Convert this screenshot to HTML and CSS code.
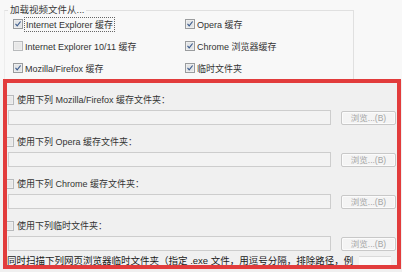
FILE: index.html
```html
<!DOCTYPE html>
<html>
<head>
<meta charset="utf-8">
<link rel="stylesheet" href="styles.css">
</head>
<body>
<div class="page">
  <div class="top">
    <fieldset class="group">
      <legend>加载视频文件从...</legend>
      <div class="grid">
        <div class="opt">
          <svg class="cb" viewBox="0 0 10 10"><rect x=".5" y=".5" width="9" height="9" fill="#f6f6f6" stroke="#9a9c9e"/><rect x="1.5" y="1.5" width="7" height="7" fill="#e2e4e6"/><path d="M2.5 4.9 L4.2 6.9 L7.6 2.5" fill="none" stroke="#3a5a8c" stroke-width="1.1"/></svg>
          <span class="focus">Internet Explorer 缓存</span>
        </div>
        <div class="opt">
          <svg class="cb" viewBox="0 0 10 10"><rect x=".5" y=".5" width="9" height="9" fill="#f6f6f6" stroke="#9a9c9e"/><rect x="1.5" y="1.5" width="7" height="7" fill="#e2e4e6"/><path d="M2.5 4.9 L4.2 6.9 L7.6 2.5" fill="none" stroke="#3a5a8c" stroke-width="1.1"/></svg>
          <span>Opera 缓存</span>
        </div>
        <div class="opt">
          <svg class="cb" viewBox="0 0 10 10"><rect x=".5" y=".5" width="9" height="9" fill="#f4f4f4" stroke="#b8babc"/><rect x="1.5" y="1.5" width="7" height="7" fill="#e8e8e8"/></svg>
          <span>Internet Explorer 10/11 缓存</span>
        </div>
        <div class="opt">
          <svg class="cb" viewBox="0 0 10 10"><rect x=".5" y=".5" width="9" height="9" fill="#f6f6f6" stroke="#9a9c9e"/><rect x="1.5" y="1.5" width="7" height="7" fill="#e2e4e6"/><path d="M2.5 4.9 L4.2 6.9 L7.6 2.5" fill="none" stroke="#3a5a8c" stroke-width="1.1"/></svg>
          <span>Chrome 浏览器缓存</span>
        </div>
        <div class="opt">
          <svg class="cb" viewBox="0 0 10 10"><rect x=".5" y=".5" width="9" height="9" fill="#f6f6f6" stroke="#9a9c9e"/><rect x="1.5" y="1.5" width="7" height="7" fill="#e2e4e6"/><path d="M2.5 4.9 L4.2 6.9 L7.6 2.5" fill="none" stroke="#3a5a8c" stroke-width="1.1"/></svg>
          <span>Mozilla/Firefox 缓存</span>
        </div>
        <div class="opt">
          <svg class="cb" viewBox="0 0 10 10"><rect x=".5" y=".5" width="9" height="9" fill="#f6f6f6" stroke="#9a9c9e"/><rect x="1.5" y="1.5" width="7" height="7" fill="#e2e4e6"/><path d="M2.5 4.9 L4.2 6.9 L7.6 2.5" fill="none" stroke="#3a5a8c" stroke-width="1.1"/></svg>
          <span>临时文件夹</span>
        </div>
      </div>
    </fieldset>
  </div>

  <div class="lower">
    <div class="block">
      <div class="opt sub">
        <svg class="cb" viewBox="0 0 10 10"><rect x=".5" y=".5" width="9" height="9" fill="#f4f4f4" stroke="#b8babc"/><rect x="1.5" y="1.5" width="7" height="7" fill="#e8e8e8"/></svg>
        <span>使用下列 Mozilla/Firefox 缓存文件夹：</span>
      </div>
      <div class="pathrow"><div class="field"></div><div class="btn">浏览...(B)</div></div>
    </div>
    <div class="block">
      <div class="opt sub">
        <svg class="cb" viewBox="0 0 10 10"><rect x=".5" y=".5" width="9" height="9" fill="#f4f4f4" stroke="#b8babc"/><rect x="1.5" y="1.5" width="7" height="7" fill="#e8e8e8"/></svg>
        <span>使用下列 Opera 缓存文件夹：</span>
      </div>
      <div class="pathrow"><div class="field"></div><div class="btn">浏览...(B)</div></div>
    </div>
    <div class="block">
      <div class="opt sub">
        <svg class="cb" viewBox="0 0 10 10"><rect x=".5" y=".5" width="9" height="9" fill="#f4f4f4" stroke="#b8babc"/><rect x="1.5" y="1.5" width="7" height="7" fill="#e8e8e8"/></svg>
        <span>使用下列 Chrome 缓存文件夹：</span>
      </div>
      <div class="pathrow"><div class="field"></div><div class="btn">浏览...(B)</div></div>
    </div>
    <div class="block last">
      <div class="opt sub">
        <svg class="cb" viewBox="0 0 10 10"><rect x=".5" y=".5" width="9" height="9" fill="#f4f4f4" stroke="#b8babc"/><rect x="1.5" y="1.5" width="7" height="7" fill="#e8e8e8"/></svg>
        <span>使用下列临时文件夹：</span>
      </div>
      <div class="pathrow"><div class="field"></div><div class="btn">浏览...(B)</div></div>
    </div>
    <div class="note">同时扫描下列网页浏览器临时文件夹（指定 .exe 文件，用逗号分隔，排除路径，例<span class="notefield"></span></div>
  </div>

  <div class="redbox"></div>
</div>
</body>
</html>
```

FILE: styles.css
```css
html, body {
  margin: 0;
  padding: 0;
}

body {
  font-family: "Liberation Sans", "Noto Sans CJK SC", sans-serif;
  font-size: 9px;
  color: #333;
}

.page {
  position: relative;
  width: 402px;
  height: 272px;
  overflow: hidden;
  background: #f0f0f0;
}

.top {
  height: 80px;
  box-sizing: border-box;
  padding-top: 3px;
  background: #f8f8f8;
  overflow: hidden;
}

.group {
  margin: 0 48px 0 4px;
  padding: 0;
  height: 100px;
  border: 1px solid #e0e0e0;
  border-left-color: #ededed;
}

.group legend {
  margin-left: 3px;
  padding: 0 2px;
  line-height: 14px;
  font-size: 9.5px;
  color: #383838;
}

.grid {
  display: grid;
  grid-template-columns: 172px 1fr;
  grid-auto-rows: 22px;
  padding-left: 8px;
  margin-top: -4px;
}

.opt {
  display: flex;
  align-items: center;
  gap: 2px;
  white-space: nowrap;
}

.cb {
  width: 10px;
  height: 10px;
  flex: none;
}

.focus {
  outline: 1px dotted #666;
  outline-offset: 0;
  padding: 0 1px;
}

.lower {
  padding: 13px 0 0 4px;
}

.block {
  margin-bottom: 10px;
}

.block.last {
  margin-bottom: 3px;
}

.sub {
  height: 14px;
  line-height: 14px;
  gap: 3px;
  margin-bottom: 3px;
}

.pathrow {
  display: flex;
  align-items: center;
  gap: 10px;
  margin-left: 4px;
  height: 15px;
}

.field {
  width: 321px;
  height: 13px;
  border: 1px solid #cdcdcd;
  background: #f3f3f3;
}

.btn {
  width: 53px;
  height: 12px;
  border: 1px solid #c8c8c8;
  border-radius: 2px;
  background: #f4f4f4;
  box-shadow: inset 0 0 0 1px #fbfbfb;
  color: #a4a4a4;
  font-size: 8.5px;
  line-height: 12px;
  text-align: center;
}

.note {
  padding-left: 3px;
  line-height: 14px;
  font-size: 9.5px;
  color: #1a1a1a;
  white-space: nowrap;
}

.notefield {
  display: inline-block;
  width: 32px;
  height: 9px;
  margin-left: 6px;
  vertical-align: middle;
  background: #fafafa;
  border-top: 1px solid #dadada;
}

.redbox {
  position: absolute;
  left: 3px;
  top: 79px;
  right: 1px;
  bottom: 3px;
  border: 4px solid #e23c3c;
  pointer-events: none;
}
```
